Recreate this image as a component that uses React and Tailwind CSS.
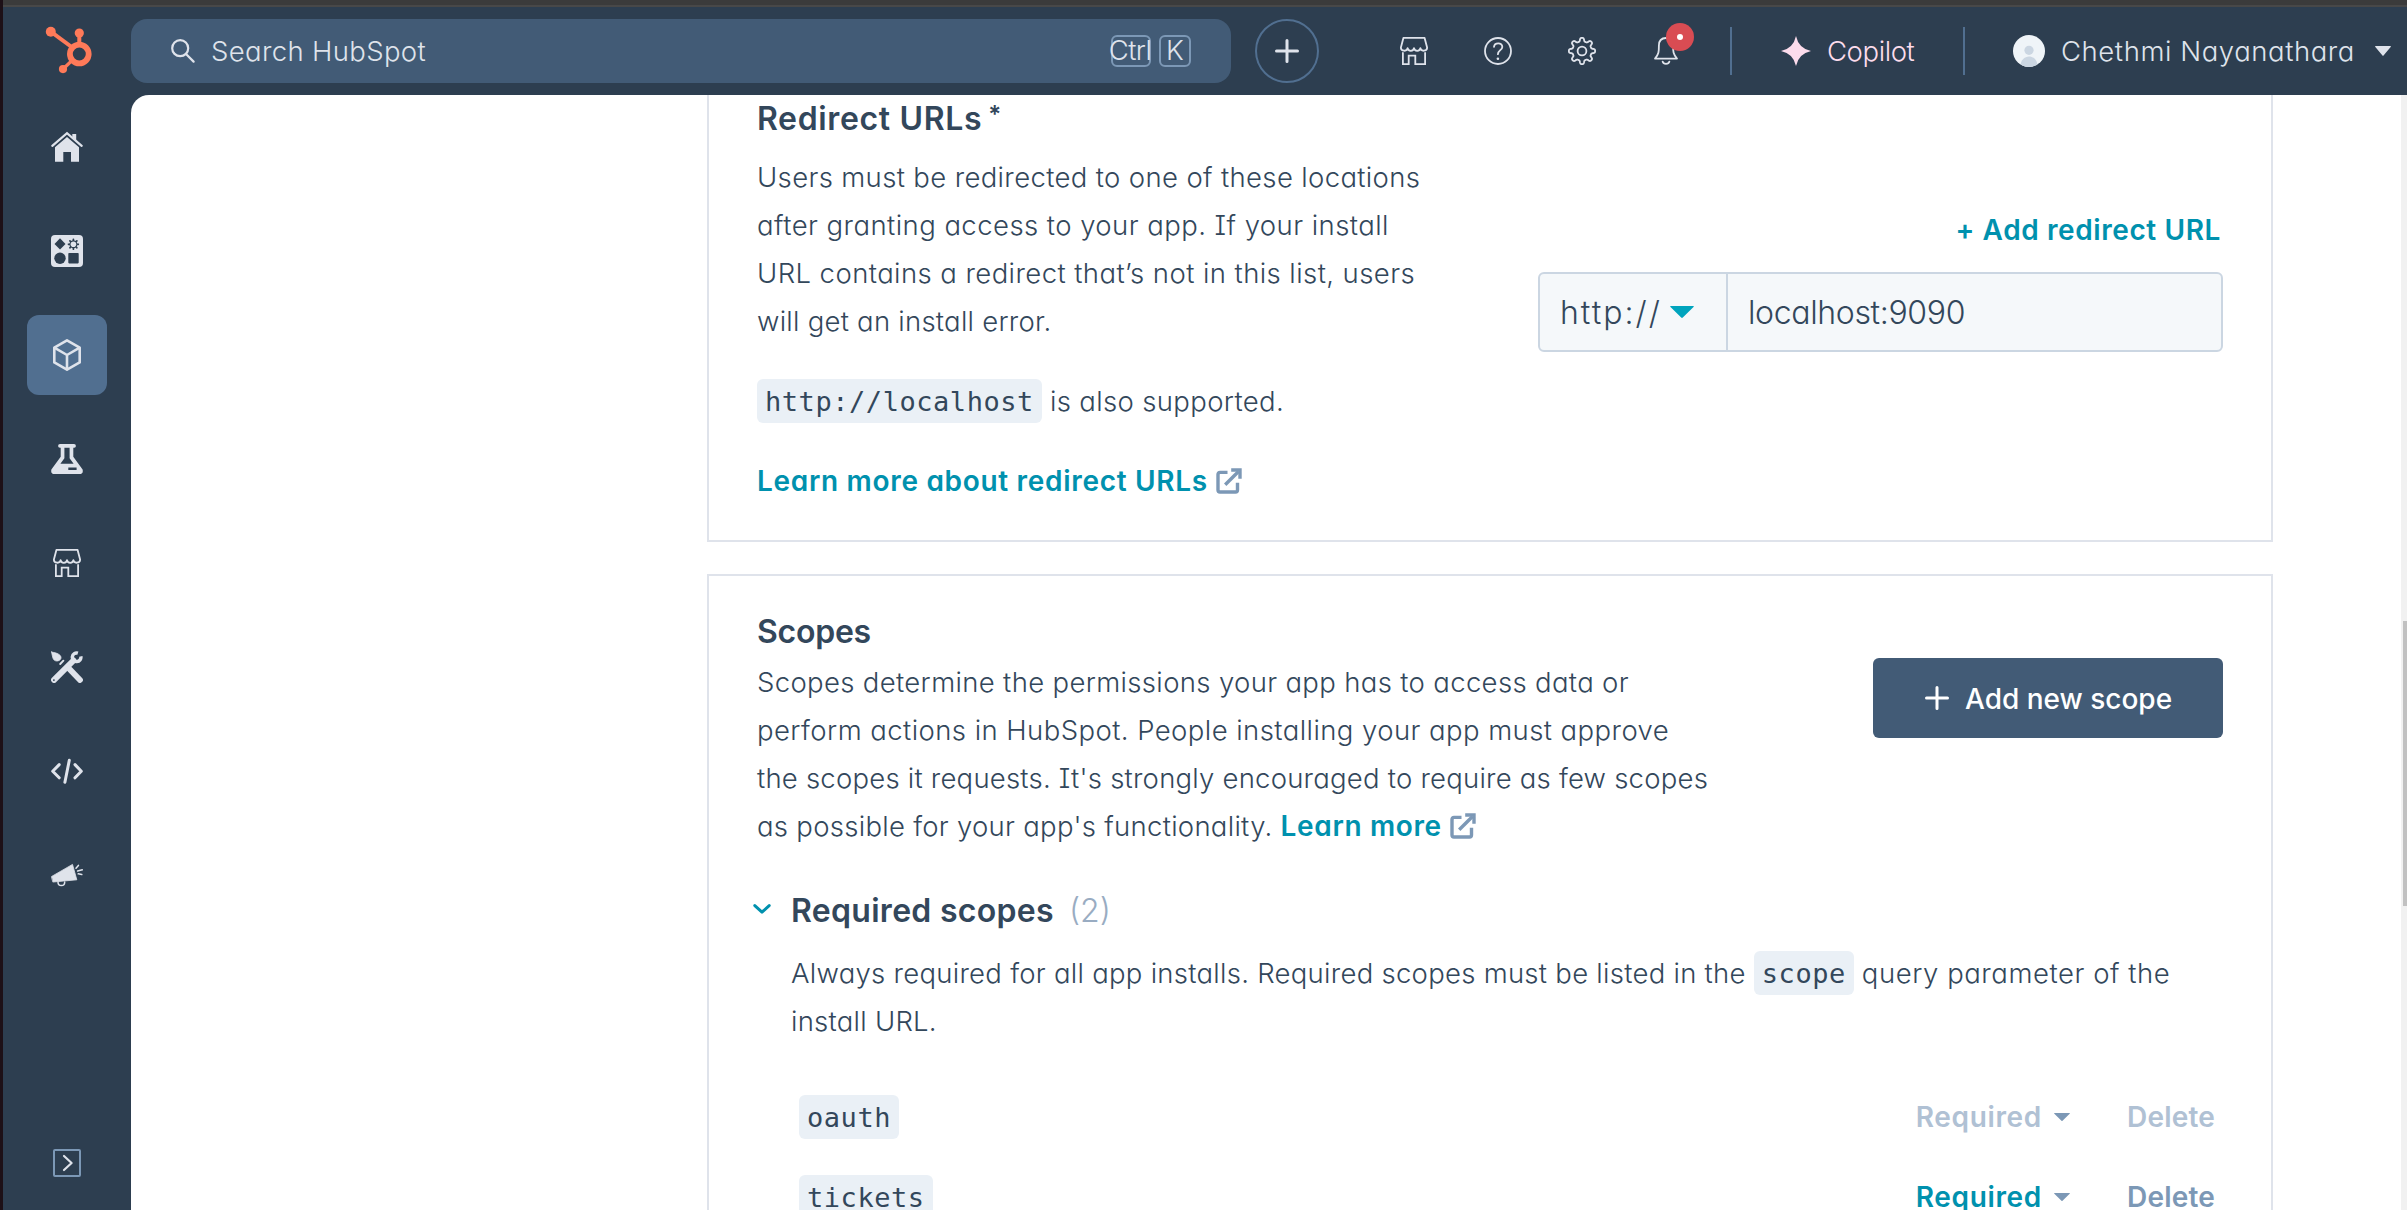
import React from "react";

const gearPoints = (cx, cy, base, amp, sharp) =>
  Array.from({ length: 145 }, (_, i) => {
    const a = (i / 144) * Math.PI * 2;
    const r = base + amp * Math.tanh(sharp * (Math.cos(8 * a) - 0.1));
    return `${(cx + r * Math.sin(a)).toFixed(2)},${(cy - r * Math.cos(a)).toFixed(2)}`;
  }).join(" ");

function StoreIcon({ className }) {
  return (
    <svg viewBox="2 2 28 28" className={className} fill="none" stroke="currentColor" strokeWidth="1.8" strokeLinejoin="round" strokeLinecap="round">
      <path d="M5.4 2.9H26.6L29.1 12.4C29.3 16.6 22.9 16.8 22.4 13.2C22 16.7 16.4 16.7 16 13.2C15.6 16.7 10 16.7 9.6 13.2C9.1 16.8 2.7 16.6 2.9 12.4Z" />
      <path d="M4.9 18V29.1H10.7V20.6H17.3V29.1H27.1V18" strokeLinejoin="miter" />
    </svg>
  );
}

function Logo() {
  return (
    <svg viewBox="45 26 48 48" className="ml-[42px] -mt-0.5 size-12 shrink-0" fill="#ff7a59" stroke="#ff7a59">
      <g stroke="none">
        <circle cx="50.8" cy="31.7" r="5" />
        <circle cx="79.3" cy="33" r="4.6" />
        <circle cx="63" cy="69.1" r="4.1" />
      </g>
      <path d="M50.8 31.7L73 48" strokeWidth="4" />
      <path d="M79.3 33V45" strokeWidth="4" />
      <path d="M63 69L72 60.5" strokeWidth="3.2" />
      <circle cx="79.3" cy="54" r="9.4" fill="none" strokeWidth="5.8" />
    </svg>
  );
}

const HomeIcon = (
  <svg viewBox="0 0 32 32" className="size-8" fill="currentColor">
    <path d="M21.3 3H25.2V10L21.3 7Z" />
    <path d="M1.3 14.8L16 2.2L30.7 14.8" fill="none" stroke="currentColor" strokeWidth="2.2" strokeLinecap="round" />
    <path d="M16 6.1L28 16.2V30.7H20V21H12.3V30.7H4V16.2Z" />
  </svg>
);

const WorkspaceIcon = (
  <svg viewBox="0 0 32 32" className="size-8" fill="#2d3e50">
    <rect width="32" height="32" rx="4" fill="currentColor" />
    <path d="M9 3.2L14.5 8.9L9 14.6L3.5 8.9Z" />
    <polygon points={gearPoints(22.4, 9.3, 4.8, 0.9, 3)} />
    <circle cx="22.4" cy="9.3" r="2.8" fill="currentColor" />
    <circle cx="9" cy="23.3" r="5.7" />
    <rect x="17.3" y="18" width="10.4" height="10.4" rx="0.8" />
  </svg>
);

const CubeIcon = (
  <svg viewBox="0 0 32 32" className="size-8" fill="none" stroke="currentColor" strokeWidth="2.6" strokeLinejoin="round">
    <path d="M16 1.4L28.7 8.6V23.4L16 30.6L3.3 23.4V8.6Z" />
    <path d="M3.3 8.6L16 16L28.7 8.6M16 16V30.6" />
  </svg>
);

const FlaskIcon = (
  <svg viewBox="0 0 32 32" className="size-8" fill="currentColor">
    <path fillRule="evenodd" d="M9 1H23Q24.9 1 24.9 2.9T23 4.7H22.3V13.8L31.6 26.6Q32.6 31 28.6 31H3.4Q-0.6 31 0.4 26.6L9.7 13.8V4.7H9Q7.1 4.7 7.1 2.9T9 1ZM13.4 4.7V15.2L9.4 20.7H22.6L18.6 15.2V4.7ZM17.3 24.4V27H25.6V24.4Z" />
  </svg>
);

const ToolsIcon = (
  <svg viewBox="0 0 32 32" className="size-8" fill="none" stroke="currentColor" strokeLinecap="round">
    <path d="M17 16.5L29 29" strokeWidth="5.8" />
    <path d="M22.5 9.5L3.1 28.9" strokeWidth="6" />
    <path d="M26.9 2.2A4.3 4.3 0 1 0 29.8 5.3" strokeWidth="3.4" strokeLinecap="butt" />
    <path d="M9.2 13L12.4 9.7" strokeWidth="1.9" />
    <path d="M0.6 1C3.6 1.8 6.8 2 9 4.3C10.8 6.3 10 8.6 8.2 9.4C5.8 10.6 3 10 2 7.2C1.3 5.2 1 3 0.6 1Z" fill="currentColor" strokeWidth="0.8" />
    <circle cx="2.9" cy="29.1" r="0.9" fill="#2d3e50" stroke="none" />
  </svg>
);

const CodeIcon = (
  <svg viewBox="0 0 32 32" className="size-8" fill="none" stroke="currentColor" strokeWidth="3" strokeLinecap="round" strokeLinejoin="round">
    <path d="M8.2 9.6L1.7 16.2L8.2 22.8M24 9.6L30.3 16.2L24 22.8M18.3 5.3L13.9 27.3" />
  </svg>
);

const MegaphoneIcon = (
  <svg viewBox="0 0 32 32" className="size-8" fill="none" stroke="currentColor" strokeWidth="1.5" strokeLinecap="round">
    <path d="M0.7 17.4L21.5 5.4L25.8 20.8L2.2 23Z" fill="currentColor" strokeLinejoin="round" strokeWidth="0.8" />
    <path d="M7 23C7 27.8 13.7 27.8 13.7 23M25 9.2L27.4 6.4M26.6 12L31.3 10.8M27.2 14.8L30.8 15.6" />
  </svg>
);

const navItems = [
  { id: "home", icon: HomeIcon },
  { id: "workspaces", icon: WorkspaceIcon },
  { id: "apps", icon: CubeIcon, active: true },
  { id: "testing", icon: FlaskIcon },
  { id: "marketplace", icon: <StoreIcon className="size-7" /> },
  { id: "tools", icon: ToolsIcon },
  { id: "code", icon: CodeIcon },
  { id: "updates", icon: MegaphoneIcon },
];

function ExternalIcon() {
  return (
    <svg viewBox="0 0 26 26" className="size-[26px] shrink-0" fill="none" stroke="#7c98b6" strokeWidth="3.4">
      <path d="M11.5 4.4H4Q2 4.4 2 6.4V22Q2 24 4 24H19.5Q21.5 24 21.5 22V14.8" />
      <path d="M9.2 16.8L22.5 3.5" />
      <path d="M15.2 2H24V10.8" />
    </svg>
  );
}

function Caret({ className }) {
  return (
    <svg viewBox="0 0 24 12" preserveAspectRatio="none" className={className} fill="currentColor">
      <path d="M0.8 0H23.2Q24.4 0 23.5 1.1L12.8 11.5Q12 12.3 11.2 11.5L0.5 1.1Q-0.4 0 0.8 0Z" />
    </svg>
  );
}

function PlusIcon({ className }) {
  return (
    <svg viewBox="0 0 24 24" className={className} fill="none" stroke="currentColor" strokeWidth="3" strokeLinecap="round">
      <path d="M12 1.5V22.5M1.5 12H22.5" />
    </svg>
  );
}

function Chip({ children }) {
  return (
    <code className="flex h-11 shrink-0 items-center rounded-md bg-[#eaf0f6] px-2 pt-0.5 font-['DejaVu_Sans_Mono',monospace] text-[27px] tracking-[0.55px]">
      {children}
    </code>
  );
}

function Header() {
  return (
    <header className="flex h-[88px] shrink-0 items-center text-[27.5px] font-light text-[#dfe3eb]">
      <div className="w-32 shrink-0">
        <Logo />
      </div>
      <div className="flex h-16 w-[1100px] shrink-0 items-center rounded-2xl bg-[#425b76] pr-10 pl-10">
        <svg viewBox="0 0 24 24" className="size-6" fill="none" stroke="currentColor" strokeWidth="2.2" strokeLinecap="round">
          <circle cx="9.2" cy="9.2" r="8" />
          <path d="M15 15L22.6 22.6" />
        </svg>
        <span className="ml-4 pt-0.5 tracking-[0.35px]">Search HubSpot</span>
        <kbd className="ml-auto flex h-8 w-10 items-center justify-center rounded-md border-2 border-[#7c98b6] font-['Inter',sans-serif] text-[27.5px] font-light tracking-[-0.6px]">
          <span className="-ml-0.5">Ctrl</span>
        </kbd>
        <kbd className="ml-2 flex size-8 items-center justify-center rounded-md border-2 border-[#7c98b6] font-['Inter',sans-serif] text-[27.5px] font-light">
          K
        </kbd>
      </div>
      <button className="ml-6 flex size-16 shrink-0 items-center justify-center rounded-full border-2 border-[#516f90]">
        <PlusIcon className="size-6" />
      </button>
      <div className="ml-[81px] flex shrink-0 items-center gap-14">
        <StoreIcon className="size-7" />
        <svg viewBox="0 0 28 28" className="size-7" fill="none" stroke="currentColor" strokeWidth="1.8" strokeLinecap="round">
          <circle cx="14" cy="14" r="13" />
          <path d="M10 9.9C10.4 5.2 18.4 5.2 18.3 10C18.2 13.2 13.9 13.2 13.9 17.2" />
          <circle cx="13.9" cy="21.8" r="1.3" fill="currentColor" stroke="none" />
        </svg>
        <svg viewBox="0 0 28 28" className="size-7" fill="none" stroke="currentColor" strokeWidth="1.8" strokeLinejoin="round">
          <polygon points={gearPoints(14, 14, 11.4, 1.8, 2.2)} />
          <circle cx="14" cy="14" r="4.4" />
        </svg>
        <div className="relative size-7">
          <svg viewBox="0 0 28 28" className="size-7" fill="none" stroke="currentColor" strokeWidth="1.8" strokeLinejoin="round" strokeLinecap="round">
            <path d="M14 1C8.8 1 6.9 4.7 6.9 8.6C6.9 15 6.8 17.2 3 21.6H25C21.2 17.2 21.1 15 21.1 8.6C21.1 4.7 19.2 1 14 1Z" />
            <path d="M10.6 24.6C11.4 27.6 16.6 27.6 17.4 24.6" />
          </svg>
          <span className="absolute -top-3.5 left-3.5 flex size-7 items-center justify-center rounded-full bg-[#d94c53]">
            <span className="size-1.5 rounded-full bg-white" />
          </span>
        </div>
      </div>
      <div className="ml-[50px] h-12 w-0.5 shrink-0 bg-[#516f90]" />
      <button className="ml-[49px] flex w-[134px] shrink-0 items-center text-[#fcdcec]">
        <svg viewBox="0 0 30 30" className="size-[30px] shrink-0" fill="currentColor">
          <path d="M15 0Q17.6 12.4 30 15Q17.6 17.6 15 30Q12.4 17.6 0 15Q12.4 12.4 15 0Z" />
        </svg>
        <span className="ml-4 pt-0.5 tracking-[-0.4px]">Copilot</span>
      </button>
      <div className="ml-12 h-12 w-0.5 shrink-0 bg-[#516f90]" />
      <button className="ml-12 flex grow items-center">
        <svg viewBox="0 0 32 32" className="size-8 shrink-0">
          <clipPath id="avatar">
            <circle cx="16" cy="16" r="16" />
          </clipPath>
          <g clipPath="url(#avatar)">
            <rect width="32" height="32" fill="#eff4f8" />
            <circle cx="16" cy="15.3" r="4.6" fill="#cbd6e2" />
            <path d="M7.3 32C7.3 18 24.7 18 24.7 32Z" fill="#cbd6e2" />
          </g>
        </svg>
        <span className="ml-4 pt-0.5 tracking-[0.57px]">Chethmi Nayanathara</span>
        <Caret className="mr-4 ml-auto h-2.5 w-4" />
      </button>
    </header>
  );
}

function Sidebar() {
  return (
    <nav className="flex w-32 shrink-0 flex-col items-center gap-6 pt-3 pb-[33px] text-[#dfe3eb]">
      {navItems.map(({ id, icon, active }) => (
        <button
          key={id}
          className={`flex size-20 shrink-0 items-center justify-center rounded-xl ${active ? "bg-[#516f90]" : ""}`}
        >
          {icon}
        </button>
      ))}
      <button className="mt-auto flex size-7 items-center justify-center rounded-xs border-2 border-[#7c98b6]">
        <svg viewBox="0 0 12 18" className="ml-0.5 h-[18px] w-3" fill="none" stroke="currentColor" strokeWidth="2.2" strokeLinecap="round" strokeLinejoin="round">
          <path d="M2 2L9.6 9L2 16" />
        </svg>
      </button>
    </nav>
  );
}

function RedirectCard() {
  return (
    <section className="flex h-[447px] shrink-0 justify-between border-x-2 border-b-2 border-[#dfe3eb] px-12 pt-1">
      <div>
        <h2 className="flex h-10 items-center text-[32px] font-semibold tracking-[0.65px]">
          Redirect URLs<span className="ml-1.5 -mt-2 text-[24px]">*</span>
        </h2>
        <p className="mt-3.5 leading-[48px]">
          <span className="block tracking-[0.35px]">Users must be redirected to one of these locations</span>
          <span className="block tracking-[0.44px]">after granting access to your app. If your install</span>
          <span className="block tracking-[0.42px]">URL contains a redirect that’s not in this list, users</span>
          <span className="block tracking-[0.25px]">will get an install error.</span>
        </p>
        <p className="mt-8 flex h-12 items-center gap-2 tracking-[0.35px]">
          <Chip>http://localhost</Chip>
          <span className="pt-px">is also supported.</span>
        </p>
        <p className="mt-8 flex h-12 items-center gap-2 text-[28px] font-semibold tracking-[0.69px] text-[#0091ae]">
          <span>Learn more about redirect URLs</span>
          <ExternalIcon />
        </p>
      </div>
      <div className="flex w-[685px] flex-col pt-[107px]">
        <button className="mr-0.5 h-12 self-end text-[28px] font-semibold tracking-[0.6px] text-[#0091ae]">
          + Add redirect URL
        </button>
        <div className="mt-[18px] flex h-20 items-stretch rounded-md border-2 border-[#cbd6e2] bg-[#f5f8fa] text-[32px]">
          <div className="flex w-[188px] shrink-0 items-center border-r-2 border-[#cbd6e2] pl-5 tracking-[2px]">
            <span className="pt-0.5">http://</span>
            <Caret className="ml-2 h-3 w-6 text-[#00a4bd]" />
          </div>
          <div className="flex items-center pt-0.5 pl-5 tracking-[-0.35px]">localhost:9090</div>
        </div>
      </div>
    </section>
  );
}

function ScopeRow({ name, locked }) {
  return (
    <div className="flex h-20 items-center pr-2 pl-2">
      <Chip>{name}</Chip>
      <button
        className={`ml-auto flex items-center gap-3 text-[28px] font-semibold tracking-[0.65px] ${locked ? "text-[#b0c1d4]" : "text-[#0091ae]"}`}
      >
        <span>Required</span>
        <Caret className="h-2 w-4 text-[#7c98b6]" />
      </button>
      <button
        className={`ml-[57px] text-[28px] font-semibold tracking-[0.2px] ${locked ? "text-[#b0c1d4]" : "text-[#7c98b6]"}`}
      >
        Delete
      </button>
    </div>
  );
}

function ScopesCard() {
  return (
    <section className="mt-8 flex h-[700px] shrink-0 flex-col border-2 border-[#dfe3eb] px-12 pt-9">
      <div className="flex justify-between">
        <div>
          <h2 className="h-10 text-[32px] leading-10 font-semibold tracking-[-0.25px]">Scopes</h2>
          <p className="mt-1.5 leading-[48px]">
            <span className="block tracking-[0.34px]">Scopes determine the permissions your app has to access data or</span>
            <span className="block tracking-[0.43px]">perform actions in HubSpot. People installing your app must approve</span>
            <span className="block tracking-[0.22px]">the scopes it requests. It's strongly encouraged to require as few scopes</span>
            <span className="flex items-center tracking-[0.28px]">
              as possible for your app's functionality.
              <span className="ml-2 text-[28px] font-semibold tracking-[0.65px] text-[#0091ae]">Learn more</span>
              <span className="ml-2">
                <ExternalIcon />
              </span>
            </span>
          </p>
        </div>
        <button className="mt-[46px] flex h-20 w-[350px] items-center rounded-md bg-[#425b76] pl-[52px] text-[28px] font-medium text-white">
          <PlusIcon className="size-6" />
          <span className="ml-4 pt-px">Add new scope</span>
        </button>
      </div>
      <div className="mt-[41px] flex h-10 items-center">
        <svg viewBox="0 0 18 10" className="-mt-1 -ml-1 h-2.5 w-[18px]" fill="none" stroke="#0091ae" strokeWidth="3" strokeLinecap="round" strokeLinejoin="round">
          <path d="M1.8 1.6L9 8.2L16.2 1.6" />
        </svg>
        <h3 className="ml-5 text-[32px] font-semibold tracking-[0.3px]">Required scopes</h3>
        <span className="ml-[15px] text-[32px] text-[#99acc2]">(2)</span>
      </div>
      <div className="mt-[18px] pl-[34px]">
        <p className="leading-[48px]">
          <span className="flex h-12 items-center gap-2 tracking-[0.27px]">
            <span>Always required for all app installs. Required scopes must be listed in the</span>
            <Chip>scope</Chip>
            <span className="tracking-[0.55px]">query parameter of the</span>
          </span>
          <span className="block tracking-[0.25px]">install URL.</span>
        </p>
        <div className="mt-8">
          <ScopeRow name="oauth" locked />
          <ScopeRow name="tickets" />
        </div>
      </div>
    </section>
  );
}

export default function App() {
  return (
    <div className="flex h-[1210px] w-[2407px] overflow-hidden bg-[#2d3e50] font-['Inter',sans-serif] whitespace-nowrap [font-feature-settings:'cv11','cv08']">
      <div className="w-[3px] shrink-0 bg-[#1d1017]" />
      <div className="flex min-w-0 grow flex-col">
        <div className="h-[7px] shrink-0 border-b-2 border-[#484848] bg-[#3b3b3b]" />
        <Header />
        <div className="flex min-h-0 grow">
          <Sidebar />
          <main className="flex grow overflow-hidden rounded-tl-[18px] bg-white text-[27.5px] font-light text-[#33475b]">
            <div className="ml-[576px] flex w-[1566px] shrink-0 flex-col">
              <RedirectCard />
              <ScopesCard />
            </div>
            <div className="ml-auto flex w-1.5 justify-end bg-[#f1f1f1]">
              <div className="mt-[526px] h-[285px] w-1 bg-[#c1c1c1]" />
            </div>
          </main>
        </div>
      </div>
    </div>
  );
}
